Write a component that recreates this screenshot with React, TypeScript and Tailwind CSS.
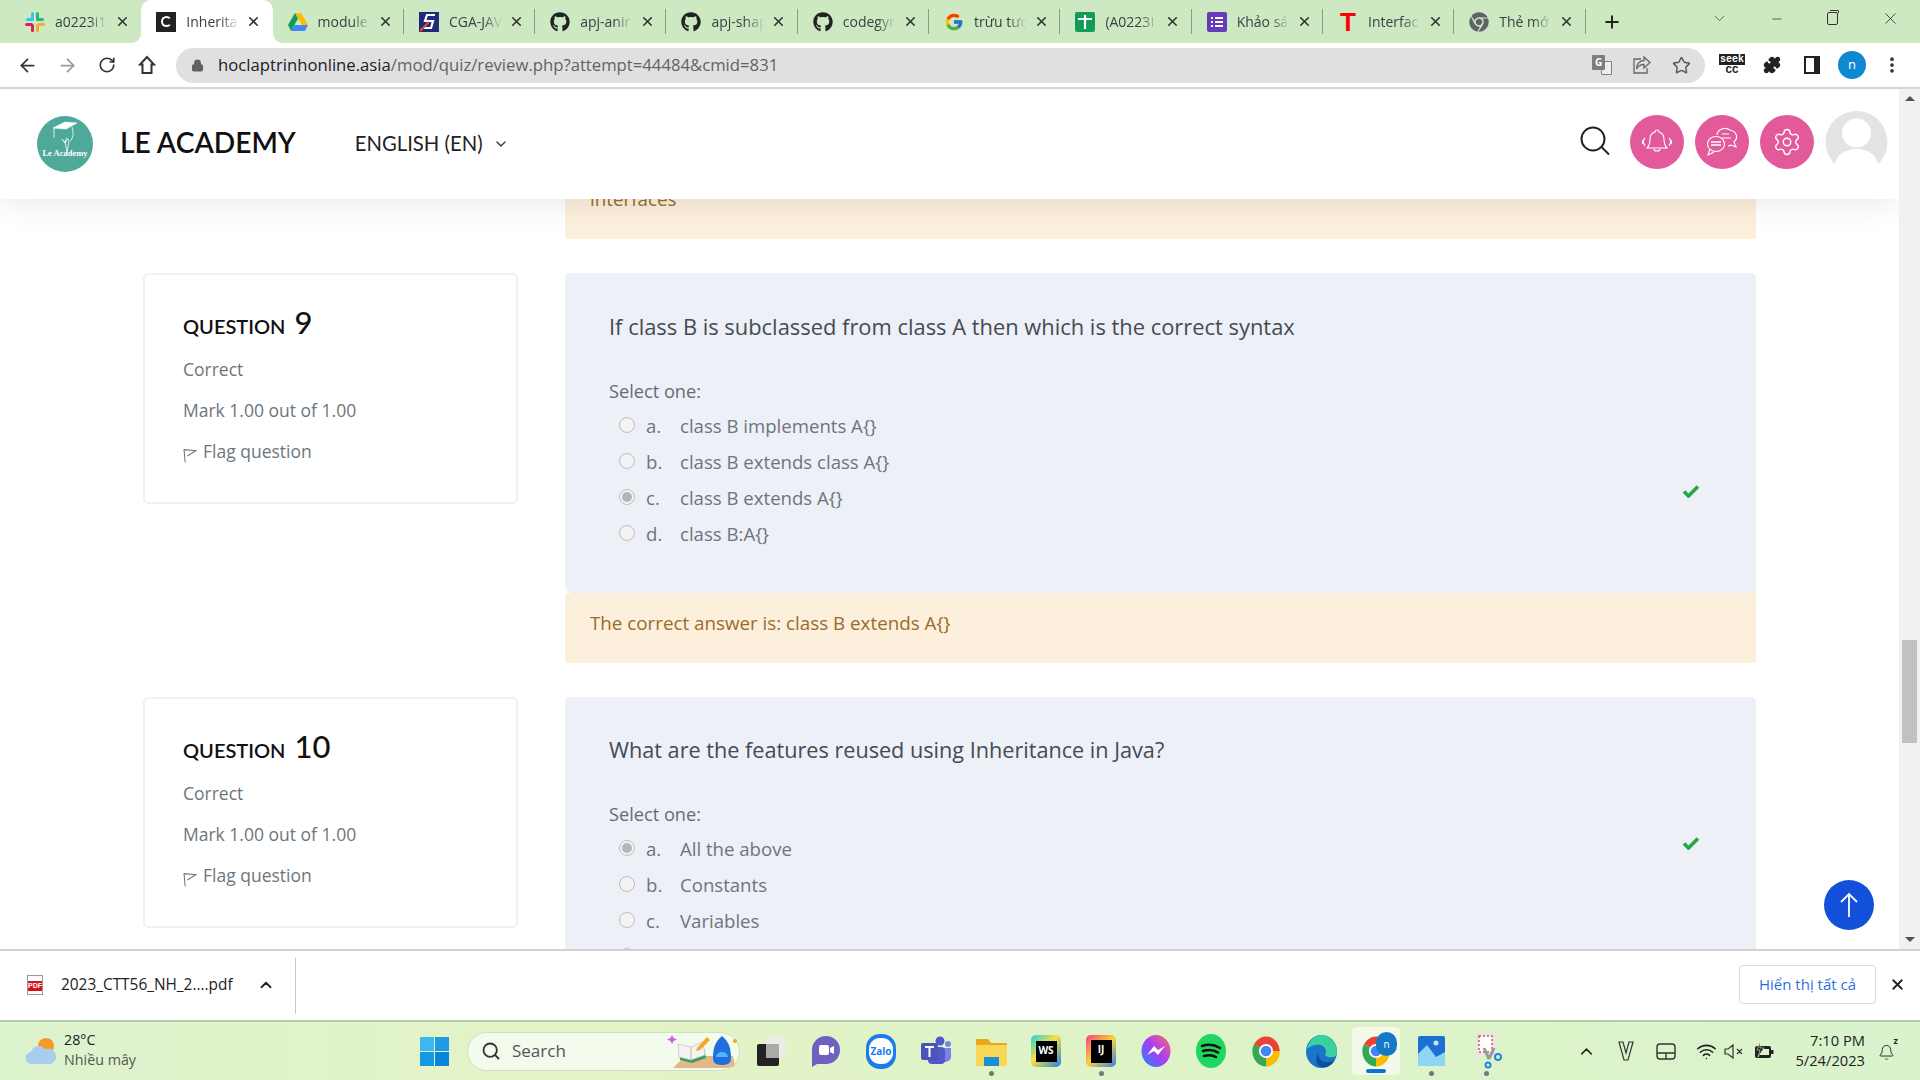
import React from "react";
import { ArrowLeft, ArrowRight, RotateCw, Lock, Star, X, Plus, Minus, ChevronDown, ChevronUp, Search, Settings, Puzzle, MoreVertical, Wifi, Bell } from "lucide-react";
import { FaGithub, FaChrome } from "react-icons/fa";
import { FcGoogle } from "react-icons/fc";

const Slack = () => (
  <svg width="20" height="20" viewBox="0 0 20 20">
    <rect x="1" y="6" width="8" height="3" rx="1.5" fill="#36c5f0" />
    <rect x="6" y="0" width="3" height="8" rx="1.5" fill="#36c5f0" />
    <rect x="11" y="0" width="3" height="8" rx="1.5" fill="#2eb67d" />
    <rect x="11" y="6" width="8" height="3" rx="1.5" fill="#2eb67d" />
    <rect x="11" y="12" width="3" height="8" rx="1.5" fill="#ecb22e" />
    <rect x="12" y="11" width="8" height="3" rx="1.5" fill="#ecb22e" />
    <rect x="6" y="12" width="3" height="8" rx="1.5" fill="#e01e5a" />
    <rect x="0" y="11" width="8" height="3" rx="1.5" fill="#e01e5a" />
  </svg>
);
const Drive = () => (
  <svg width="20" height="18" viewBox="0 0 20 18">
    <path d="M7 0h6l7 12h-6z" fill="#fbbc04" />
    <path d="M7 0l3 5.500L3 18 0 12z" fill="#0f9d58" />
    <path d="M6.500 12H20l-3 6H3z" fill="#4285f4" />
  </svg>
);
const Cga = () => (
  <svg width="20" height="20" viewBox="0 0 20 20">
    <rect width="20" height="20" fill="#1d2b7a" />
    <path d="M16 3H8L6 9h8l-2 7H5" fill="none" stroke="#fff" strokeWidth="2.200" />
    <path d="M1 19L10 10" stroke="#e8502a" strokeWidth="2" />
  </svg>
);
const SheetIcon = () => (
  <svg width="20" height="20" viewBox="0 0 20 20">
    <rect width="20" height="20" rx="2" fill="#0f9d58" />
    <path d="M3 7h14M10 3v14" stroke="#fff" strokeWidth="2.200" />
  </svg>
);
const FormIcon = () => (
  <svg width="20" height="20" viewBox="0 0 20 20">
    <rect width="20" height="20" rx="2" fill="#673ab7" />
    <path d="M8 6h8M8 10h8M8 14h8M4 6h2M4 10h2M4 14h2" stroke="#fff" strokeWidth="1.800" />
  </svg>
);

const tabs: { t: string; i: React.ReactNode; active?: boolean; sep?: boolean }[] = [
  { t: "a0223i1", i: <Slack /> },
  { t: "Inherita", active: true, i: <span className="w-5 h-5 bg-[#222] flex items-center justify-center"><span className="w-[11px] h-[11px] rounded-full border-[2.500px] border-white border-r-transparent" /></span> },
  { t: "module", i: <Drive />, sep: true },
  { t: "CGA-JAV", i: <Cga />, sep: true },
  { t: "apj-anir", i: <FaGithub size={20} color="#222" />, sep: true },
  { t: "apj-shap", i: <FaGithub size={20} color="#222" />, sep: true },
  { t: "codegyr", i: <FaGithub size={20} color="#222" />, sep: true },
  { t: "trừu tượ", i: <FcGoogle size={20} />, sep: true },
  { t: "(A0223I", i: <SheetIcon />, sep: true },
  { t: "Khảo sá", i: <FormIcon />, sep: true },
  { t: "Interfac", i: <span className="text-[26px] font-bold text-[#f00] leading-5 font-['Liberation_Sans',sans-serif]">T</span>, sep: true },
  { t: "Thẻ mớ", i: <FaChrome size={20} color="#5f6368" />, sep: true },
];

const TabBar = () => (
  <div className="h-[43px] shrink-0 bg-[#cde9c2] flex items-stretch pl-[10px] font-['Open_Sans',sans-serif]">
    {tabs.map((tab) => (
      <div key={tab.t} className={`relative w-[131.300px] flex items-center pl-[15px] ${tab.active ? "bg-white rounded-t-[10px]" : ""}`}>
        {tab.active && <span className="absolute bottom-0 -left-[10px] w-[10px] h-[10px] bg-[radial-gradient(circle_at_0_0,transparent_10px,white_10px)]" />}
        {tab.active && <span className="absolute bottom-0 -right-[10px] w-[10px] h-[10px] bg-[radial-gradient(circle_at_100%_0,transparent_10px,white_10px)]" />}
        <span className="w-5 h-5 flex items-center justify-center shrink-0">{tab.i}</span>
        <span className="ml-[10px] w-[53px] overflow-hidden whitespace-nowrap text-[14px] text-[#3c4043] [mask-image:linear-gradient(90deg,black_65%,transparent)]">{tab.t}</span>
        <X size={15} strokeWidth={2.600} color="#333" className="ml-[7px] shrink-0" />
        {tab.sep && <span className="absolute right-0 top-[9px] h-[25px] w-px bg-[#8a9a84]" />}
      </div>
    ))}
    <Plus size={20} strokeWidth={2.400} color="#222" className="self-center ml-[16px]" />
    <ChevronDown size={17} strokeWidth={1} color="#333" className="self-center mt-[-6px] ml-[89px]" />
    <Minus size={14} strokeWidth={1.200} color="#222" className="self-center mt-[-6px] ml-[42px]" />
    <span className="self-center mt-[-6px] ml-[43px] w-[11px] h-[13px] border border-[#333] rounded-[2px] relative">
      <span className="absolute -top-[3px] left-[2px] w-[9px] h-[3px] border-t border-r border-[#333] rounded-tr-[2px]" />
    </span>
    <X size={19} strokeWidth={1} color="#222" className="self-center mt-[-6px] ml-[43px]" />
  </div>
);

const TBtn = ({ children }: { children: React.ReactNode }) => <span className="w-[40px] flex items-center justify-center shrink-0">{children}</span>;

const Toolbar = () => (
  <div className="h-[46px] shrink-0 bg-white border-b-2 border-[#d6d6d6] flex items-center pl-[7px] font-['Open_Sans',sans-serif]">
    <TBtn><ArrowLeft size={21} strokeWidth={2} color="#333" /></TBtn>
    <TBtn><ArrowRight size={21} strokeWidth={2} color="#9a9a9a" /></TBtn>
    <TBtn><RotateCw size={18} strokeWidth={2.200} color="#333" /></TBtn>
    <TBtn>
      <svg width="18" height="20" viewBox="0 0 18 20" fill="none" stroke="#333" strokeWidth="2" strokeLinejoin="miter">
        <path d="M9 2L2 9.500h2.500V18h9V9.500H16z" />
      </svg>
    </TBtn>
    <div className="ml-[9px] h-[35px] w-[1529px] rounded-full bg-[#e0e0e0] flex items-center pl-[15px] pr-[14px]">
      <Lock size={13} strokeWidth={2.500} color="#5f6368" fill="#5f6368" />
      <span className="ml-[14px] text-[16.700px] text-[#5f6368] whitespace-nowrap"><span className="text-[#202124]">hoclaptrinhonline.asia</span>/mod/quiz/review.php?attempt=44484&amp;cmid=831</span>
      <span className="ml-auto w-[20px] h-[20px] relative">
        <span className="absolute right-0 bottom-0 w-[11px] h-[14px] border border-[#7b7f83] bg-[#eee] rounded-[1px]" />
        <span className="absolute left-0 top-0 w-[13px] h-[15px] bg-[#7b7f83] rounded-[1px] text-white text-[10px] leading-[15px] text-center font-bold">G</span>
      </span>
      <svg width="20" height="20" viewBox="0 0 20 20" fill="none" stroke="#666" strokeWidth="1.300" className="ml-[20px]">
        <path d="M9 4H2v14h13v-5" />
        <path d="M12 2l6 5.500-6 5.500V9.500C8 9.500 6 11 4.500 14c0-5 3-8.500 7.500-8.500z" />
      </svg>
      <Star size={19} strokeWidth={1.800} color="#555" className="ml-[20px]" />
    </div>
    <span className="ml-[7px] w-[40px] flex flex-col items-center font-['Liberation_Mono',monospace] font-bold text-[#222]">
      <span className="bg-[#222] text-white text-[10px] leading-[11px] px-[1px]">seek</span>
      <span className="text-[11px] leading-[11px]">CC</span>
    </span>
    <TBtn><Puzzle size={18} color="#222" fill="#222" /></TBtn>
    <TBtn><span className="w-[16px] h-[18px] border-[2.500px] border-[#222] border-r-[6px]" /></TBtn>
    <TBtn><span className="w-[28px] h-[28px] rounded-full bg-[#0f88d2] text-white text-[13px] flex items-center justify-center">n</span></TBtn>
    <TBtn><MoreVertical size={20} strokeWidth={2.500} color="#333" /></TBtn>
  </div>
);

const Logo = () => (
  <div className="w-[56px] h-[56px] rounded-full bg-[#4fa99a] flex flex-col items-center overflow-hidden shrink-0">
    <svg width="28" height="36" viewBox="0 0 28 36" className="mt-[3px]" fill="none" stroke="#fff">
      <path d="M2 9L14 3l12 1-11 6z" fill="#fff" strokeWidth="0.600" />
      <path d="M3 9v10M21 8c2 6 1 12-2 14M14 22l2 12 2-12-2-3z" strokeWidth="0.800" />
      <path d="M11 20l3 4 2-3" strokeWidth="1" />
    </svg>
    <span className="text-[8.500px] leading-[9px] text-white font-['Liberation_Serif',serif] font-bold mt-[-6px] whitespace-nowrap">Le Academy</span>
  </div>
);

const BellIcon = () => (
  <svg width="30" height="30" viewBox="0 0 30 30" fill="none" stroke="#fff" strokeWidth="1.100">
    <path d="M15 3a2 2 0 0 1 2 2c3.500 1 5 4 5 7 0 4 1 7 3 9H5c2-2 3-5 3-9 0-3 1.500-6 5-7a2 2 0 0 1 2-2z" />
    <path d="M12 22a3 2 0 0 0 6 0M3 11c-2 2-2 5 0 8M1 13c-.8 1.500-.8 3 0 4M27 11c2 2 2 5 0 8M29 13c.8 1.500.8 3 0 4" />
  </svg>
);
const ChatIcon = () => (
  <svg width="32" height="30" viewBox="0 0 32 30" fill="none" stroke="#fff" strokeWidth="1.100">
    <path d="M11 8a8 7 0 0 1 13-5 8 7 0 0 1 4 12l2 5-5-2a8 7 0 0 1-3 1" />
    <path d="M16 7h7M16 11h9" />
    <ellipse cx="10" cy="17" rx="8.500" ry="7.500" />
    <path d="M4 22l-2 6 6-3" />
    <path d="M5 15h10M5 18h10" strokeWidth="1.400" />
  </svg>
);

const Header = () => (
  <div className="h-[110px] shrink-0 bg-white relative z-10 shadow-[0_4px_30px_rgba(0,0,0,0.09)] flex items-center pl-[37px] pr-[11px]">
    <Logo />
    <span className="ml-[27px] text-[28.200px] font-semibold text-[#111] font-['Lato',sans-serif] whitespace-nowrap mt-[-4px]">LE ACADEMY</span>
    <span className="ml-[59px] text-[20.300px] text-[#222] font-['Lato',sans-serif] whitespace-nowrap mt-[-1px]">ENGLISH (EN)</span>
    <ChevronDown size={16} strokeWidth={2} color="#333" className="ml-[10px] mt-[-1px]" />
    <svg width="34" height="34" viewBox="0 0 34 34" fill="none" stroke="#222" strokeWidth="2" className="ml-auto mr-[18px] mt-[-4px]">
      <circle cx="15" cy="14" r="11.500" />
      <path d="M23.500 22L31 29.500" />
    </svg>
    <div className="flex items-center gap-[11px] mt-[-4px]">
      <span className="w-[54px] h-[54px] rounded-full bg-[#e25a9a] flex items-center justify-center"><BellIcon /></span>
      <span className="w-[54px] h-[54px] rounded-full bg-[#e25a9a] flex items-center justify-center"><ChatIcon /></span>
      <span className="w-[54px] h-[54px] rounded-full bg-[#e25a9a] flex items-center justify-center"><Settings size={30} strokeWidth={1.100} color="#fff" /></span>
      <svg width="63" height="62" viewBox="0 0 63 62">
        <circle cx="31.500" cy="31" r="31" fill="#e4e4e4" />
        <circle cx="31.500" cy="22" r="14.500" fill="#fff" />
        <path d="M9 56c2-13 12-18 22.500-18S52 43 54 56a31 31 0 0 1-45 0z" fill="#fff" />
      </svg>
    </div>
  </div>
);

const Radio = ({ on }: { on?: boolean }) => (
  <span className="w-[16px] h-[16px] rounded-full border border-[#bdbdbd] bg-[#f3f3f3] flex items-center justify-center shrink-0 mt-[-2px]">
    {on && <span className="w-[10px] h-[10px] rounded-full bg-[#b5b5b5]" />}
  </span>
);

const CheckMark = ({ cls }: { cls: string }) => (
  <svg width="18" height="14" viewBox="0 0 18 14" className={`ml-auto mr-[56px] shrink-0 ${cls}`}>
    <path d="M2 7.500l4.500 4.500L16 2.500" fill="none" stroke="#28a745" strokeWidth="3.600" />
  </svg>
);

type Q = {
  n: string; q: string; opts: [string, string, boolean?][]; feedback?: string; top: string; panel: string; check: string; qSize: string;
};

const QuestionBlock = ({ n, q, opts, feedback, top, panel, check, qSize }: Q) => (
  <div className={`flex items-start shrink-0 pl-[143px] ${top}`}>
    <div className="w-[375px] h-[231px] shrink-0 border-2 border-[#eef1f6] rounded-[5px] pl-[38px] pt-[24px] font-['Open_Sans',sans-serif]">
      <div className="flex items-baseline h-[50px] text-[#111]">
        <span className="text-[20px] font-semibold font-['Lato',sans-serif]">QUESTION</span>
        <span className="ml-[9px] text-[31px] font-['Lato',sans-serif] font-medium">{n}</span>
      </div>
      <div className="text-[17.500px] text-[#6c757d] leading-[41px]">Correct</div>
      <div className="text-[17.500px] text-[#6c757d] leading-[41px]">Mark 1.00 out of 1.00</div>
      <div className="text-[17.500px] text-[#6c757d] leading-[41px] flex items-center">
        <svg width="14" height="18" viewBox="0 0 13 16" fill="none" stroke="#777" strokeWidth="1" className="mt-[7px]">
          <path d="M2 15L1 3l11 1-8 5" />
        </svg>
        <span className="ml-[6px]">Flag question</span>
      </div>
    </div>
    <div className="ml-[47px] w-[1191px] shrink-0 font-['Open_Sans',sans-serif]">
      <div className={`bg-[#edf0f7] rounded-t-[5px] rounded-bl-[8px] pl-[44px] ${panel}`}>
        <div className={`text-[#444b53] leading-[32px] whitespace-nowrap ${qSize}`}>{q}</div>
        <div className="mt-[34px] text-[18.200px] leading-[28px] text-[#666c72]">Select one:</div>
        <div className="flex items-start mt-[3px]">
          <div className="flex flex-col">
            {opts.map(([k, v, on]) => (
              <div key={k} className="h-[36px] flex items-center pl-[10px] text-[18.600px] text-[#6c757d]">
                <Radio on={on} />
                <span className="ml-[11px] w-[34px]">{k}</span>
                <span>{v}</span>
              </div>
            ))}
          </div>
          <CheckMark cls={check} />
        </div>
      </div>
      {feedback && (
        <div className="h-[70px] bg-[#fcefdc] pl-[25px] text-[18.800px] leading-[60px] text-[#9a6b2b]">{feedback}</div>
      )}
    </div>
  </div>
);

const Main = () => (
  <div className="flex-1 min-h-0 flex">
    <div className="flex-1 min-w-0 flex flex-col overflow-hidden relative">
      <Header />
      <div className="h-[40px] shrink-0 ml-[565px] w-[1191px] bg-[#fcefdc] pl-[25px] text-[18.800px] text-[#9a6b2b] leading-[18px] font-['Open_Sans',sans-serif] overflow-hidden"><div className="mt-[-9px]">interfaces</div></div>
      <QuestionBlock
        n="9"
        top="mt-[34px]"
        panel="pt-[38px] h-[320px]"
        check="mt-[76px]"
        qSize="text-[21.900px]"
        q="If class B is subclassed from class A then which is the correct syntax"
        opts={[["a.", "class B implements A{}"], ["b.", "class B extends class A{}"], ["c.", "class B extends A{}", true], ["d.", "class B:A{}"]]}
        feedback="The correct answer is: class B extends A{}"
      />
      <QuestionBlock
        n="10"
        top="mt-[34px]"
        panel="pt-[37px] h-[320px]"
        check="mt-[5px]"
        qSize="text-[21.650px]"
        q="What are the features reused using Inheritance in Java?"
        opts={[["a.", "All the above", true], ["b.", "Constants"], ["c.", "Variables"], ["d.", "Methods"]]}
      />
      <button className="absolute left-[1824px] top-[791px] w-[50px] h-[50px] rounded-full bg-[#1250dc] flex items-center justify-center">
        <svg width="22" height="26" viewBox="0 0 22 26" fill="none" stroke="#fff" strokeWidth="1.800"><path d="M11 25V2M3 10l8-8 8 8" /></svg>
      </button>
    </div>
    <div className="w-[21px] shrink-0 bg-[#f1f1f1] flex flex-col items-center">
      <span className="mt-[7px] w-0 h-0 border-x-[5px] border-x-transparent border-b-[5px] border-b-[#505050]" />
      <span className="mt-[539px] w-[15px] h-[103px] bg-[#c1c1c1]" />
      <span className="mt-auto mb-[7px] w-0 h-0 border-x-[5px] border-x-transparent border-t-[5px] border-t-[#505050]" />
    </div>
  </div>
);

const DownloadBar = () => (
  <div className="h-[71px] shrink-0 bg-white border-t-2 border-[#d2d2d2] flex items-center font-['Open_Sans',sans-serif]">
    <span className="ml-[27px] w-[16px] h-[20px] border border-[#999] bg-white relative flex items-end shrink-0 mt-[-2px]">
      <span className="absolute left-0 right-0 top-[5px] h-[10px] bg-[#d8101c] text-white text-[7px] leading-[10px] font-bold text-center font-['Liberation_Sans',sans-serif]">PDF</span>
    </span>
    <span className="ml-[18px] text-[15.400px] text-[#222] whitespace-nowrap w-[173px] mt-[-2px]">2023_CTT56_NH_2....pdf</span>
    <ChevronUp size={18} strokeWidth={2.400} color="#222" className="ml-[23px] mt-[-2px]" />
    <span className="ml-[20px] w-px h-[56px] bg-[#c8c8c8]" />
    <button className="ml-auto w-[137px] h-[39px] border border-[#dadce0] rounded-[4px] text-[15px] font-medium text-[#2f6fdc] mt-[-3px]">Hiển thị tất cả</button>
    <X size={17} strokeWidth={2.600} color="#222" className="ml-[13px] mr-[14px] mt-[-3px]" />
  </div>
);

const ChromeBall = ({ size = 32 }: { size?: number }) => (
  <svg width={size} height={size} viewBox="0 0 48 48">
    <path d="M24 24L7.100 14.200A19.500 21.500 0 0 1 43.500 24z" fill="#ea4335" />
    <path d="M24 24h19.500A19.500 21.500 0 0 1 24 46z" fill="#fbbc05" />
    <path d="M24 24v22A19.500 21.500 0 0 1 7.100 14.200z" fill="#34a853" />
    <circle cx="24" cy="24" r="10" fill="#fff" />
    <circle cx="24" cy="24" r="7.500" fill="#4285f4" />
  </svg>
);

const Slot = ({ children, dot }: { children: React.ReactNode; dot?: boolean }) => (
  <div className="w-[55px] h-[58px] shrink-0 flex items-center justify-center relative">
    {children}
    {dot && <span className="absolute bottom-[4px] left-[25px] w-[5px] h-[5px] rounded-full bg-[#777]" />}
  </div>
);

const Taskbar = () => (
  <div className="h-[60px] shrink-0 border-t-2 border-[#b9c9b0] bg-[linear-gradient(90deg,#ddf3ce_0%,#e3f4c6_28%,#dff3c8_60%,#daf3cc_100%)] flex items-center font-['Open_Sans',sans-serif] overflow-hidden">
    <div className="w-[420px] shrink-0 flex items-center pl-[25px]">
      <svg width="32" height="30" viewBox="0 0 32 30">
        <circle cx="21" cy="10" r="8" fill="#f59a23" />
        <path d="M7 28a6 6 0 0 1-1-12 8 8 0 0 1 14-3 7 7 0 0 1 6 15z" fill="#a9cdec" />
      </svg>
      <div className="ml-[7px] flex flex-col text-[14.300px] leading-[20px] mt-[-2px]">
        <span className="text-[#222]">28°C</span>
        <span className="text-[#555]">Nhiều mây</span>
      </div>
    </div>
    <svg width="29" height="29" viewBox="0 0 29 29" className="shrink-0">
      <rect width="14" height="14" fill="#3cb8f0" /><rect x="15" width="14" height="14" fill="#1d9ce6" />
      <rect y="15" width="14" height="14" fill="#149ae4" /><rect x="15" y="15" width="14" height="14" fill="#0a84d8" />
    </svg>
    <div className="ml-[18px] w-[273px] h-[39px] shrink-0 rounded-full bg-[#f2fbec] border border-[#cfe0c4] flex items-center pl-[13px]">
      <Search size={20} strokeWidth={2.200} color="#333" />
      <span className="ml-[11px] text-[17px] text-[#555]">Search</span>
      <svg width="70" height="38" viewBox="0 0 70 38" className="ml-auto mr-[2px]">
        <path d="M6 36l12-12h48l2 10-8 2z" fill="#e0b98a" />
        <path d="M12 14l12 3 12-5 3 14-14 5-12-3z" fill="#3f9b62" />
        <path d="M11 12l13 3 12-5 2 13-14 5-12-3z" fill="#f3f3f0" stroke="#bbb" strokeWidth=".600" />
        <path d="M24 15l0 13" stroke="#aaa" strokeWidth=".800" />
        <path d="M30 16l10-11 3 3-10 10-4 1z" fill="#f6a623" />
        <path d="M46 26c0-10 2-16 9-22 7 6 9 12 9 22 0 5-3 7-9 7s-9-2-9-7z" fill="#1f6fe0" />
        <path d="M49 25a6 5 0 0 1 12 0z" fill="#57b4f3" />
        <path d="M5 3l1.500 3L10 7.500 6.500 9 5 12 3.500 9 0 7.500 3.500 6z" fill="#d25be0" />
        <circle cx="68" cy="9" r="2" fill="#f6a623" />
      </svg>
    </div>
    <div className="ml-[3.500px] flex items-center">
      <Slot><svg width="30" height="30" viewBox="0 0 30 30"><rect x="10" y="0" width="20" height="22" rx="2" fill="#e9ede6" /><rect x="1" y="8" width="22" height="22" rx="2" fill="#222" /><rect x="10" y="8" width="13" height="14" fill="#aaa" /></svg></Slot>
      <Slot><svg width="30" height="32" viewBox="0 0 30 32"><path d="M15 1a14 14 0 0 1 0 28H6l-5 3V15A14 14 0 0 1 15 1z" fill="#6f61c0" /><rect x="8" y="10" width="10" height="10" rx="2" fill="#fff" /><path d="M19 13l4-2v8l-4-2z" fill="#fff" /></svg></Slot>
      <Slot><span className="w-[30px] h-[35px] rounded-[14px] bg-[#1a7cf0] flex items-center justify-center"><span className="w-[24px] h-[26px] rounded-[11px] bg-white text-[#1a7cf0] text-[10px] font-bold flex items-center justify-center">Zalo</span></span></Slot>
      <Slot><svg width="32" height="30" viewBox="0 0 32 30"><circle cx="20" cy="5" r="4.500" fill="#5059c9" /><circle cx="28" cy="8" r="3" fill="#7b83eb" /><path d="M23 12h8v9c0 3-3 5-8 5z" fill="#7b83eb" /><rect x="8" y="11" width="17" height="17" rx="4" fill="#5059c9" /><rect x="1" y="7" width="17" height="17" rx="2" fill="#4b53bc" /><path d="M5 11h9M9.500 11v10" stroke="#fff" strokeWidth="2" /></svg></Slot>
      <Slot dot><svg width="31" height="29" viewBox="0 0 31 29"><path d="M0 2h12l3 4h16v7H0z" fill="#e9a91f" /><path d="M0 8h31v21H0z" fill="#f8d657" /><rect x="8" y="20" width="15" height="9" fill="#1a8fd6" /></svg></Slot>
      <Slot><span className="w-[30px] h-[32px] bg-[linear-gradient(135deg,#21d0ef,#f9e13c_45%,#1f7ff0)] rounded-[5px] flex items-center justify-center"><span className="w-[21px] h-[21px] bg-black text-white text-[10px] font-bold leading-[18px] text-center">WS</span></span></Slot>
      <Slot dot><span className="w-[30px] h-[32px] bg-[linear-gradient(135deg,#fb3c7a,#f5d73a_50%,#2e7ff0)] rounded-[5px] flex items-center justify-center"><span className="w-[21px] h-[23px] bg-black text-white text-[10px] font-bold leading-[18px] text-center">IJ</span></span></Slot>
      <Slot><svg width="30" height="32" viewBox="0 0 30 32"><defs><linearGradient id="m" x1="0" y1="1" x2="1" y2="0"><stop offset="0" stopColor="#1a8cff" /><stop offset=".5" stopColor="#a53ef5" /><stop offset="1" stopColor="#ff6a68" /></linearGradient></defs><ellipse cx="15" cy="16" rx="14.500" ry="16" fill="url(#m)" /><path d="M6 20l7-9 4 4 7-4-7 9-4-4z" fill="#fff" /></svg></Slot>
      <Slot><svg width="30" height="34" viewBox="0 0 30 34"><ellipse cx="15" cy="17" rx="15" ry="17" fill="#1ed760" /><path d="M6 12c6-2 13-1 18 2M7 17c5-1.500 11-1 15 1.500M8 22c4-1 9-1 12 1" fill="none" stroke="#111" strokeWidth="2.500" strokeLinecap="round" /></svg></Slot>
      <Slot><ChromeBall size={34} /></Slot>
      <Slot><svg width="31" height="33" viewBox="0 0 31 33"><ellipse cx="15.500" cy="16.500" rx="15.500" ry="16.500" fill="#1a75c9" /><path d="M1 14C3 5 9 0 16 0c8 0 15 7 15 17 0 5-5 6-9 5-3-1-3-3-2-5 0-6-6-9-11-7-4 1-6 2-8 4z" fill="#3ad0a0" /><path d="M12 18c0 7 6 10 11 9 3 0 5-2 6-3-2 6-8 9-14 8-5-1-6-8-3-14z" fill="#0c4f9c" /></svg></Slot>
      <Slot>
        <span className="w-[48px] h-[48px] bg-[#f3f9e8] rounded-[4px] flex items-center justify-center relative">
          <ChromeBall size={34} />
          <span className="absolute right-[3px] top-[5px] w-[21px] h-[24px] rounded-full bg-[#1478c8] text-white text-[10px] flex items-center justify-center">n</span>
          <span className="absolute bottom-[2px] left-[14px] w-[20px] h-[4px] rounded-full bg-[#0f74d0]" />
        </span>
      </Slot>
      <Slot dot><svg width="27" height="30" viewBox="0 0 27 30"><rect width="27" height="30" rx="2" fill="#1d6fd1" /><path d="M0 30V18l9-9 9 12 9-5v14z" fill="#8fd6f5" /><circle cx="18" cy="7" r="2.500" fill="#bfe6fb" /></svg></Slot>
      <Slot dot><svg width="32" height="36" viewBox="0 0 32 36"><rect x="6" y="0" width="20" height="22" fill="#e6e6e6" /><rect x="9" y="3" width="13" height="16" fill="#fff" stroke="#e0534a" strokeWidth="1.500" strokeDasharray="2 2" /><path d="M14 15l5 11M24 15l-5 11" stroke="#999" strokeWidth="3" /><circle cx="28" cy="24" r="3" fill="none" stroke="#1a8cd8" strokeWidth="2" /><circle cx="18" cy="32" r="2.500" fill="none" stroke="#1a8cd8" strokeWidth="2" /></svg></Slot>
    </div>
    <ChevronUp size={19} strokeWidth={1.800} color="#222" className="ml-[63px]" />
    <svg width="16" height="20" viewBox="0 0 16 20" fill="none" stroke="#333" strokeWidth="1.200" className="ml-[22px]"><path d="M1 1h4l3 11 3-11h4L10 19H6z" /></svg>
    <svg width="20" height="17" viewBox="0 0 20 17" fill="none" stroke="#333" strokeWidth="1.400" className="ml-[22px]"><rect x="1" y="1" width="18" height="15" rx="3" /><path d="M1 10h18M10 10v6" /></svg>
    <Wifi size={21} strokeWidth={1.800} color="#222" className="ml-[20px]" />
    <svg width="20" height="15" viewBox="0 0 20 15" fill="none" stroke="#333" strokeWidth="1.200" className="ml-[7px]"><path d="M1 5h3l5-4v13L4 10H1zM13 5l5 5M18 5l-5 5" /></svg>
    <svg width="20" height="18" viewBox="0 0 20 18" className="ml-[10px]"><rect x="1" y="4" width="16" height="12" rx="2" fill="#222" /><rect x="6" y="7" width="9" height="6" fill="#dff3c8" /><rect x="17" y="8" width="2.500" height="4" fill="#222" /><path d="M6 0L3 8h3l-2 7 6-9H6z" fill="#222" stroke="#dff3c8" strokeWidth=".600" /></svg>
    <div className="ml-auto flex flex-col items-end text-[14.700px] leading-[20px] text-[#222] mr-[13px] mt-[-2px]">
      <span>7:10 PM</span>
      <span>5/24/2023</span>
    </div>
    <span className="mr-[25px] relative w-[17px] h-[19px]">
      <Bell size={17} strokeWidth={1.300} color="#222" className="absolute left-0 bottom-0" />
      <span className="absolute right-[-3px] top-[-6px] text-[9px] font-bold text-[#222] leading-[10px]">z</span>
    </span>
  </div>
);

export default function App() {
  return (
    <div className="w-[1920px] h-[1080px] flex flex-col overflow-hidden bg-white">
      <TabBar />
      <Toolbar />
      <Main />
      <DownloadBar />
      <Taskbar />
    </div>
  );
}
